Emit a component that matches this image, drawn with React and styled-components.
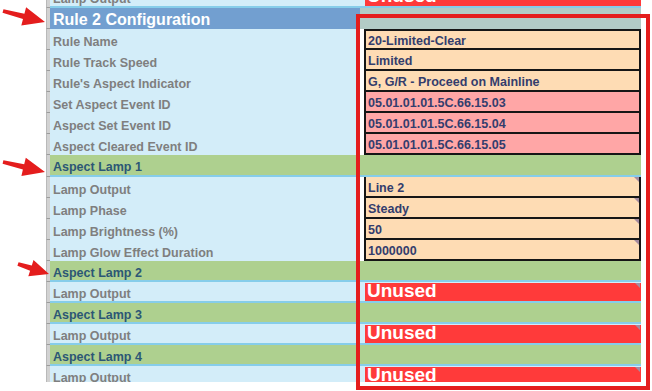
import React from "react";
import styled, { createGlobalStyle } from "styled-components";

const GlobalStyle = createGlobalStyle`
  html, body { margin: 0; padding: 0; background: #ffffff; }
  body { font-family: "Liberation Sans", Arial, sans-serif; }
`;

const ROWS = [
  { kind: "unused", label: "Lamp Output" },
  { kind: "title", label: "Rule 2 Configuration" },
  { kind: "field", label: "Rule Name", value: "20-Limited-Clear", tone: "peach", first: true },
  { kind: "field", label: "Rule Track Speed", value: "Limited", tone: "peach" },
  { kind: "field", label: "Rule's Aspect Indicator", value: "G, G/R - Proceed on Mainline", tone: "peach" },
  { kind: "field", label: "Set Aspect Event ID", value: "05.01.01.01.5C.66.15.03", tone: "pink" },
  { kind: "field", label: "Aspect Set Event ID", value: "05.01.01.01.5C.66.15.04", tone: "pink" },
  { kind: "field", label: "Aspect Cleared Event ID", value: "05.01.01.01.5C.66.15.05", tone: "pink" },
  { kind: "lamp", label: "Aspect Lamp 1", tall: true },
  { kind: "field", label: "Lamp Output", value: "Line 2", tone: "peach", note: true },
  { kind: "field", label: "Lamp Phase", value: "Steady", tone: "peach", note: true },
  { kind: "field", label: "Lamp Brightness (%)", value: "50", tone: "peach", note: true },
  { kind: "field", label: "Lamp Glow Effect Duration", value: "1000000", tone: "peach", note: true },
  { kind: "lamp", label: "Aspect Lamp 2" },
  { kind: "unused", label: "Lamp Output" },
  { kind: "lamp", label: "Aspect Lamp 3" },
  { kind: "unused", label: "Lamp Output" },
  { kind: "lamp", label: "Aspect Lamp 4" },
  { kind: "unused", label: "Lamp Output" },
];

const ARROWS = [
  { x1: 3, y1: 11, x2: 45, y2: 22, len: 22, half: 9.5 },
  { x1: 3, y1: 162, x2: 45, y2: 172, len: 22, half: 9.5 },
  { x1: 18, y1: 264, x2: 49, y2: 274, len: 19, half: 8.5 },
];

const labelBg = { title: "#729fd0", lamp: "#aed08f", field: "#d3edf9", unused: "#d3edf9" };
const labelInk = { title: "#ffffff", lamp: "#2c5775", field: "#7f7f7f", unused: "#7f7f7f" };
const valueBg = { title: "#b2cbc6", lamp: "#aed08f", field: "#ffffff", unused: "#d3edf9" };
const toneBg = { peach: "#fedcb4", pink: "#ffa6a6" };

function arrowPoints({ x1, y1, x2, y2, len, half }) {
  const dx = x2 - x1;
  const dy = y2 - y1;
  const d = Math.hypot(dx, dy);
  const ux = dx / d, uy = dy / d;
  const nx = -uy, ny = ux;
  const bx = x2 - ux * len, by = y2 - uy * len;
  const t0 = 1.8, t1 = 2.8;
  const p = [
    [x1 + nx * t0, y1 + ny * t0],
    [bx + nx * t1, by + ny * t1],
    [bx + nx * half, by + ny * half],
    [x2, y2],
    [bx - nx * half, by - ny * half],
    [bx - nx * t1, by - ny * t1],
    [x1 - nx * t0, y1 - ny * t0],
  ];
  return p.map(([a, b]) => `${a.toFixed(1)},${b.toFixed(1)}`).join(" ");
}

export default function App() {
  return (
    <Page>
      <GlobalStyle />
      <Sheet>
        <Rows>
          {ROWS.map((r, i) => (
            <Row key={i} $tall={r.tall}>
              <Gutter />
              <Label $kind={r.kind}>{r.label}</Label>
              <ValueCol $kind={r.kind}>
                {r.kind === "field" && (
                  <ValueBox $tone={r.tone} $first={r.first}>
                    {r.value}
                    {r.note && <Note />}
                  </ValueBox>
                )}
                {r.kind === "unused" && (
                  <UnusedBox>
                    <UnusedText>Unused</UnusedText>
                    <Note $inset />
                  </UnusedBox>
                )}
              </ValueCol>
            </Row>
          ))}
        </Rows>
      </Sheet>
      <Highlight />
      <Arrows width="652" height="391" viewBox="0 0 652 391">
        {ARROWS.map((a, i) => (
          <polygon key={i} points={arrowPoints(a)} fill="#e41d1d" />
        ))}
      </Arrows>
    </Page>
  );
}

const Page = styled.div`
  position: relative;
  width: 652px;
  height: 391px;
  overflow: hidden;
  background: #ffffff;
`;

const Sheet = styled.div`
  height: 382px;
  overflow: hidden;
  padding-left: 46px;
`;

const Rows = styled.div`
  display: flex;
  flex-direction: column;
  margin-top: -13px;
`;

const Row = styled.div`
  display: grid;
  grid-template-columns: 4px 310px 281px;
  height: ${(p) => (p.$tall ? 22 : 21)}px;
  flex-shrink: 0;
`;

const Gutter = styled.div`
  background: #d2d2d2;
  border-bottom: 1px solid #9c9c9c;
  border-left: 1px solid #b9b9b9;
  box-sizing: border-box;
`;

const Label = styled.div`
  display: flex;
  align-items: center;
  box-sizing: border-box;
  padding: ${(p) => (p.$kind === "title" ? "3px" : "4px")} 0 0 3px;
  background: ${(p) => labelBg[p.$kind]};
  color: ${(p) => labelInk[p.$kind]};
  font-size: ${(p) => (p.$kind === "title" ? "16px" : "12.5px")};
  font-weight: bold;
  white-space: nowrap;
  border-bottom: ${(p) => (p.$kind === "lamp" || p.$kind === "unused" ? "2px solid #86cdea" : "none")};
`;

const ValueCol = styled.div`
  box-sizing: border-box;
  padding-left: ${(p) => (p.$kind === "unused" ? 5 : 4)}px;
  background: ${(p) => valueBg[p.$kind]};
  border-bottom: ${(p) => (p.$kind === "lamp" || p.$kind === "unused" ? "2px solid #86cdea" : "none")};
  display: flex;
  flex-direction: column;
`;

const ValueBox = styled.div`
  position: relative;
  flex: 1;
  box-sizing: border-box;
  display: flex;
  align-items: center;
  padding: 3px 0 0 2px;
  border: 2px solid #161616;
  border-top-width: ${(p) => (p.$first ? 2 : 0)}px;
  background: ${(p) => toneBg[p.$tone]};
  color: #333d6d;
  font-size: 12.5px;
  font-weight: bold;
  white-space: nowrap;
`;

const UnusedBox = styled.div`
  position: relative;
  flex: 1;
  margin-top: 1px;
  overflow: hidden;
  background: #ff3a3a;
  padding-left: 2px;
`;

const UnusedText = styled.div`
  margin-top: -2px;
  color: #ffffff;
  font-size: 19px;
  line-height: 19px;
  font-weight: bold;
`;

const Note = styled.span`
  position: absolute;
  top: 0;
  right: ${(p) => (p.$inset ? 1 : 0)}px;
  width: 0;
  height: 0;
  border-top: 5px solid #a58ba0;
  border-left: 5px solid transparent;
`;

const Highlight = styled.div`
  position: absolute;
  left: 356px;
  top: 14px;
  width: 294px;
  height: 376px;
  box-sizing: border-box;
  border: 4px solid #e41d1d;
  pointer-events: none;
`;

const Arrows = styled.svg`
  position: absolute;
  left: 0;
  top: 0;
  pointer-events: none;
`;
